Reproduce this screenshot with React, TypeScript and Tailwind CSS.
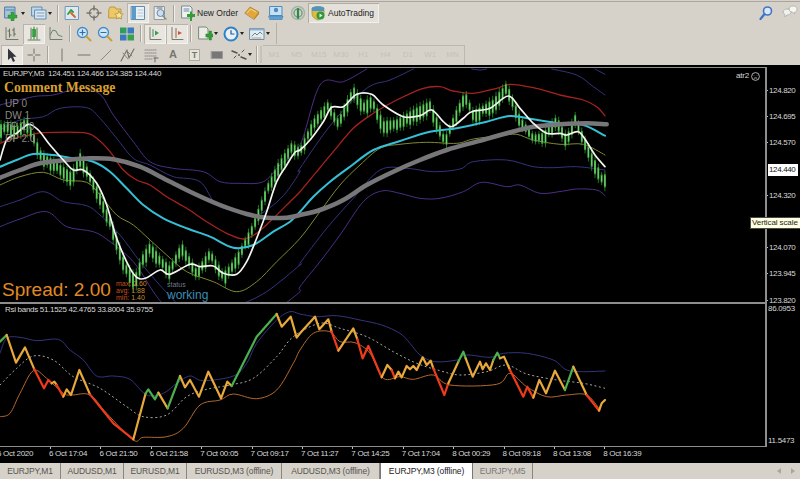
/**
 * MetaTrader 4 window: toolbars, EURJPY chart with RSI sub-window, chart tabs.
 */

import type { ReactNode } from 'react';

type Pt = [number, number];

// points were read off 3x crops, so they come in crop coordinates
const crop = (ox: number, oy: number, pts: number[]): Pt[] => {
  const out: Pt[] = [];
  for (let i = 0; i < pts.length; i += 2) out.push([ox + pts[i] / 3, oy + pts[i + 1] / 3]);
  return out;
};
const L = (...p: number[]) => crop(0, 65, p);
const R = (...p: number[]) => crop(300, 65, p);
const L2 = (...p: number[]) => crop(0, 300, p);
const R2 = (...p: number[]) => crop(300, 300, p);

const smooth = (p: Pt[]) => {
  let d = `M${p[0][0].toFixed(1)} ${p[0][1].toFixed(1)}`;
  for (let i = 0; i < p.length - 1; i++) {
    const a = p[Math.max(i - 1, 0)];
    const b = p[i];
    const c = p[i + 1];
    const e = p[Math.min(i + 2, p.length - 1)];
    d += `C${(b[0] + (c[0] - a[0]) / 6).toFixed(1)} ${(b[1] + (c[1] - a[1]) / 6).toFixed(1)} ${(c[0] - (e[0] - b[0]) / 6).toFixed(1)} ${(c[1] - (e[1] - b[1]) / 6).toFixed(1)} ${c[0].toFixed(1)} ${c[1].toFixed(1)}`;
  }
  return d;
};
const poly = (p: Pt[]) => p.map((q) => q.join(',')).join(' ');

const mainLines: { color: string; width: number; pts: Pt[] }[] = [
  // lower purple
  { color: '#4b2f86', width: 1, pts: [...L(0, 485, 60, 462, 140, 440, 200, 485, 280, 500, 330, 530, 400, 590, 460, 680, 490, 720)] },
  { color: '#4b2f86', width: 1, pts: [...L(850, 720, 900, 680), ...R(0, 665, 60, 590, 120, 510, 190, 410, 245, 378, 300, 385, 360, 400, 420, 400, 490, 380, 545, 352, 620, 365, 660, 360, 720, 385, 790, 378, 830, 372, 890, 375, 915, 392)] },
  // lower blue
  { color: '#33337f', width: 1, pts: [...L(0, 425, 60, 405, 130, 380, 190, 410, 260, 422, 300, 450, 360, 510, 420, 590, 470, 650, 530, 715)] },
  { color: '#33337f', width: 1, pts: [...L(720, 720, 800, 680, 900, 600), ...R(0, 595, 80, 490, 160, 400, 240, 315, 320, 310, 400, 320, 480, 312, 520, 290, 620, 285, 700, 305, 760, 308, 830, 305, 915, 315)] },
  // upper purple and blue
  { color: '#4b2f86', width: 1, pts: [...L(0, 120, 100, 95, 160, 90, 240, 70, 300, 88, 340, 150, 400, 230, 450, 290, 520, 310, 610, 320, 660, 350, 720, 355, 790, 350, 840, 300, 900, 240), ...R(60, 60, 130, 50, 200, 12)] },
  { color: '#33337f', width: 1, pts: [...L(0, 195, 60, 165, 130, 155, 180, 130, 260, 128, 300, 160, 350, 220, 400, 280, 450, 300, 520, 335, 600, 350, 650, 420, 720, 440, 770, 450, 820, 420, 860, 380, 900, 320), ...R(0, 310, 100, 170, 200, 70, 270, 45, 340, 12)] },
  { color: '#33337f', width: 1, pts: R(515, 12, 540, 15, 560, 12) },
  { color: '#33337f', width: 1, pts: R(755, 12, 830, 30, 880, 65, 915, 90) },
  { color: '#33337f', width: 1, pts: R(885, 12, 915, 28) },
  // red
  { color: '#a5221f', width: 1.3, pts: [...L(0, 235, 40, 220, 90, 210, 130, 203, 250, 203, 290, 220, 330, 260, 370, 315, 410, 345, 450, 360, 500, 395, 560, 430, 620, 470, 680, 505, 730, 522, 770, 505, 820, 460, 870, 410, 900, 380), ...R(50, 320, 100, 260, 160, 190, 220, 145, 290, 105, 370, 70, 420, 65, 460, 78, 520, 85, 590, 70, 630, 58, 700, 68, 780, 90, 850, 105, 890, 125, 915, 152)] },
  // olive
  { color: '#808a30', width: 1, pts: [...L(0, 360, 60, 335, 130, 322, 190, 345, 260, 352, 300, 390, 350, 450, 400, 480, 450, 525, 500, 570, 560, 620, 640, 650, 710, 680, 770, 650, 830, 590, 900, 520), ...R(60, 440, 120, 360, 180, 300, 240, 250, 300, 238, 380, 232, 470, 235, 520, 222, 600, 212, 650, 208, 700, 225, 780, 238, 850, 238, 915, 270)] },
];

const cyan = [...L(0, 305, 50, 285, 100, 267, 160, 270, 220, 280, 280, 290, 330, 320, 380, 370, 430, 420, 490, 460, 560, 490, 630, 515, 700, 548, 760, 540, 820, 500, 870, 470, 900, 440), ...R(40, 395, 90, 350, 150, 305, 220, 255, 300, 228, 390, 200, 470, 190, 560, 170, 630, 153, 700, 163, 780, 175, 850, 180, 915, 212)];
const grayMa = [...L(0, 338, 60, 315, 120, 295, 200, 285, 270, 280, 340, 283, 420, 305, 500, 345, 580, 385, 660, 420, 740, 447, 800, 458, 860, 458, 900, 450), ...R(60, 435, 130, 405, 200, 360, 280, 320, 360, 285, 440, 255, 530, 230, 620, 205, 700, 185, 780, 178, 860, 175, 920, 178)];
const whiteMa = [...L(0, 285, 20, 225, 50, 205, 85, 178, 115, 195, 150, 240, 190, 285, 220, 315, 250, 315, 290, 355, 320, 420, 350, 520, 390, 610, 415, 640, 440, 638, 480, 615, 510, 628, 570, 598, 600, 605, 640, 603, 670, 625, 710, 628, 740, 590, 770, 520, 800, 440, 830, 350, 860, 300, 885, 262), ...R(0, 255, 30, 225, 70, 170, 95, 127, 130, 125, 170, 88, 215, 88, 250, 120, 310, 155, 360, 152, 395, 135, 430, 170, 455, 185, 490, 160, 515, 140, 570, 130, 625, 93, 660, 130, 700, 175, 740, 205, 780, 205, 800, 210, 835, 200, 860, 230, 885, 270, 915, 305)];

const candlePath = [...L(0, 195, 20, 190, 50, 200, 80, 175, 100, 220, 125, 280, 160, 300, 215, 340, 240, 280, 265, 330, 300, 400, 340, 500, 375, 610, 405, 650, 425, 590, 450, 550, 480, 590, 510, 620, 545, 550, 590, 630, 630, 570, 670, 640, 695, 610, 720, 570, 760, 490, 800, 380, 835, 310, 875, 250), ...R(0, 265, 40, 180, 85, 125, 115, 180, 160, 80, 190, 130, 215, 110, 250, 185, 290, 180, 340, 150, 390, 125, 435, 235, 465, 160, 495, 95, 520, 155, 580, 120, 620, 70, 660, 170, 700, 225, 730, 220, 770, 170, 800, 230, 825, 165, 860, 250, 905, 345)];

const candleY = (x: number) => {
  for (let i = 0; i < candlePath.length - 1; i++) {
    const [x0, y0] = candlePath[i];
    const [x1, y1] = candlePath[i + 1];
    if (x >= x0 && x <= x1) return y0 + ((y1 - y0) * (x - x0)) / (x1 - x0 || 1);
  }
  return candlePath[candlePath.length - 1][1];
};

const candles: { x: number; y: number; body: number; wick: number }[] = [];
for (let x = 1; x < 605; x += 3.3) {
  const n = Math.abs(Math.sin(x * 12.9898) * 43758.5453) % 1;
  candles.push({ x, y: candleY(x) + (n - 0.5) * 3, body: 3 + n * 3.5, wick: 6 + n * 5 });
}

const GREEN = '#4caf50';
const AMBER = '#e8a93a';
const RED = '#f03a1c';
const rsi: [string, Pt[]][] = [
  [GREEN, L2(0, 125, 20, 105)],
  [AMBER, L2(20, 105, 48, 188, 75, 142, 103, 208)],
  [RED, L2(103, 208, 132, 265, 145, 240, 155, 250)],
  [AMBER, L2(155, 250, 163, 245, 170, 255)],
  [RED, L2(170, 255, 190, 290)],
  [AMBER, L2(190, 290, 200, 268, 213, 285, 238, 210, 270, 283)],
  [RED, L2(270, 283, 340, 370, 400, 418)],
  [AMBER, L2(400, 418, 437, 280)],
  [GREEN, L2(437, 280, 445, 268, 465, 298, 475, 278)],
  [AMBER, L2(475, 278, 503, 325)],
  [GREEN, L2(503, 325, 540, 228)],
  [AMBER, L2(540, 228, 555, 262, 570, 240, 597, 290, 625, 215, 663, 295, 682, 245, 695, 258)],
  [GREEN, L2(695, 258, 770, 110, 830, 42)],
  [AMBER, [...L2(830, 42, 845, 80, 872, 50, 890, 113), ...R2(0, 100, 45, 50, 58, 88, 85, 58, 95, 95)]],
  [RED, R2(95, 95, 115, 152)],
  [AMBER, R2(115, 152, 160, 85, 172, 118)],
  [RED, R2(172, 118, 188, 175, 205, 138, 245, 232)],
  [AMBER, R2(245, 232, 262, 195, 275, 210)],
  [RED, R2(275, 210, 285, 235)],
  [AMBER, R2(285, 235, 295, 215, 305, 232, 320, 198, 330, 208, 340, 198, 350, 210, 368, 172, 380, 195, 392, 182, 400, 205)],
  [RED, R2(400, 205, 433, 285, 445, 250)],
  [AMBER, R2(445, 250, 475, 185)],
  [GREEN, R2(475, 185, 490, 155, 497, 175)],
  [AMBER, R2(497, 175, 518, 230, 540, 185, 548, 208, 558, 190, 570, 210, 580, 180)],
  [GREEN, R2(580, 180, 592, 158, 600, 175)],
  [AMBER, R2(600, 175, 612, 170, 630, 210)],
  [RED, R2(630, 210, 670, 290, 682, 260, 700, 293)],
  [AMBER, R2(700, 293, 718, 240, 738, 280, 765, 212, 795, 270)],
  [GREEN, R2(795, 270, 820, 200)],
  [AMBER, R2(820, 200, 860, 285)],
  [RED, R2(860, 285, 897, 332)],
  [AMBER, R2(897, 332, 905, 310, 915, 300)],
];
const rsiBlue = [...L2(0, 160, 20, 115, 60, 112, 110, 122, 175, 118, 210, 150, 250, 180, 290, 228, 340, 228, 390, 238, 440, 285, 490, 280, 530, 250, 570, 228, 610, 242, 700, 228, 740, 190, 770, 130, 830, 60, 870, 35), ...R2(0, 42, 50, 50, 110, 47, 180, 60, 245, 75, 300, 100, 330, 130, 360, 165, 405, 185, 470, 180, 500, 165, 570, 172, 610, 160, 680, 160, 760, 180, 800, 210, 850, 215, 915, 213)];
const rsiOrange = [...L2(0, 350, 30, 340, 60, 280, 100, 212, 140, 235, 190, 280, 215, 285, 270, 285, 320, 340, 400, 420, 430, 412, 500, 410, 550, 385, 600, 315, 660, 300, 700, 282, 770, 296, 830, 270, 880, 190), ...R2(0, 150, 40, 100, 90, 95, 120, 125, 165, 128, 210, 160, 250, 235, 300, 230, 340, 238, 400, 225, 450, 255, 590, 253, 630, 220, 680, 260, 740, 290, 800, 285, 860, 285, 900, 330)];
const rsiDash = [...L2(0, 255, 50, 205, 100, 168, 160, 180, 220, 230, 300, 265, 380, 320, 430, 350, 500, 345, 560, 290, 620, 268, 690, 255, 760, 235, 830, 170, 880, 110), ...R2(60, 70, 120, 85, 200, 110, 280, 155, 350, 190, 420, 212, 480, 225, 560, 215, 620, 195, 680, 222, 770, 240, 850, 250, 915, 265)];

const priceTop = (p: number) => 90 + (124.82 - p) * 210 - 67 - 4.5;
const prices = ['124.820', '124.695', '124.570', '124.320', '124.070', '123.945', '123.820'];
const times = ['6 Oct 2020', '6 Oct 17:04', '6 Oct 21:50', '6 Oct 21:58', '7 Oct 00:05', '7 Oct 09:17', '7 Oct 11:27', '7 Oct 14:25', '7 Oct 17:04', '8 Oct 00:29', '8 Oct 09:18', '8 Oct 13:08', '8 Oct 16:39'];
const tabs = [
  { name: 'EURJPY,M1', w: 'w-[61px]' },
  { name: 'AUDUSD,M1', w: 'w-[63px]' },
  { name: 'EURUSD,M1', w: 'w-[63px]' },
  { name: 'EURUSD,M3 (offline)', w: 'w-[95px]' },
  { name: 'AUDUSD,M3 (offline)', w: 'w-[98px]' },
];

const sans = "font-['Liberation_Sans',Arial,sans-serif]";

function Ic({ children }: { children: ReactNode }) {
  return (
    <svg width="16" height="16" viewBox="0 0 16 16" fill="none" strokeLinecap="round" strokeLinejoin="round">
      {children}
    </svg>
  );
}

function Btn({ children, active, arrow, w = 'w-[22px]' }: { children?: ReactNode; active?: boolean; arrow?: boolean; w?: string }) {
  return (
    <div className={`${w} flex h-[20px] shrink-0 items-center justify-center gap-[1px] ${active ? 'bg-[#e9e6e0] shadow-[inset_1px_1px_0_#b8b4ac,inset_-1px_-1px_0_#f4f2ee]' : ''}`}>
      {children}
      {arrow && <span className="h-0 w-0 border-x-[2.5px] border-t-[3px] border-x-transparent border-t-[#222]" />}
    </div>
  );
}

const Sep = () => <div className="mx-[2px] h-[17px] w-[2px] shrink-0 border-r border-l border-r-[#f0eee8] border-l-[#a8a49c]" />;

const Plus = () => <path d="M9 8h3V5h2.5v3H16v3h-1.500v3H12v-3H9z" fill="#2f9e35" stroke="#1f7a26" strokeWidth=".4" />;

const chartLine = '#66705f';

const icons = {
  newChart: <Ic><path d="M1 2h10v11H1z" fill="#a8c4dc" stroke="#4d7ea8" /><path d="M2 5h8" stroke="#4d7ea8" /><path d="M7 7h3v3H13v3h-3v3H7v-3H4v-3h3z" fill="#32a838" stroke="#1f7a26" strokeWidth=".4" /></Ic>,
  profiles: <Ic><path d="M1 2h10v9H1z" fill="#c4d8ea" stroke="#5f8cb4" /><path d="M4 5h11v9H4z" fill="#dbe7f1" stroke="#5f8cb4" /><path d="M6 8h7M6 11h7" stroke="#7a9cb8" /></Ic>,
  market: <Ic><path d="M1.500 1.500h13v13h-13z" fill="#dfe8ef" stroke="#6f9ac0" /><path d="M4 9l3-4 2 2" stroke="#2f9e35" strokeWidth="1.800" /><path d="M7 8l4 4" stroke="#d9622b" strokeWidth="1.800" /></Ic>,
  navigator: <Ic><circle cx="8" cy="8" r="4.500" stroke="#77766e" strokeWidth="1.300" /><path d="M8 1v4M8 11v4M1 8h4M11 8h4" stroke="#77766e" strokeWidth="1.500" /></Ic>,
  favorites: <Ic><path d="M1 4l1-2h5l1 2h5v9H1z" fill="#ecc868" stroke="#bb9a3c" /><path d="M11 6l1.300 2.700 3 .4-2.200 2 .6 3-2.700-1.500L8.300 14l.6-3-2.200-2 3-.4z" fill="#f6e29a" stroke="#a98c3a" strokeWidth=".7" /></Ic>,
  terminal: <Ic><path d="M1.500 1.500h13v13h-13z" fill="#e9f1f7" stroke="#5f8cb4" /><path d="M2 2h4v12H2z" fill="#5d9ac8" /><path d="M8 5h5M8 8h5M8 11h5" stroke="#b4c8d8" /></Ic>,
  tester: <Ic><path d="M2.500 1.500h10v13h-10z" fill="#ecebe6" stroke="#8f9aa4" /><circle cx="8.500" cy="8" r="3.500" fill="#cfdcea" stroke="#5f8cb4" /><path d="M5 3h5" stroke="#8f9aa4" strokeWidth="1.500" /><path d="M11 11l3 3" stroke="#8a8a7a" strokeWidth="1.500" /></Ic>,
  order: <Ic><path d="M2 1h8l2 2v10H2z" fill="#f1f2ee" stroke="#7a8a94" /><path d="M4 4h5M4 6h5" stroke="#5f8cb4" /><path d="M8 8h3V5.500h2V8h3v3h-3v4h-2v-4H8z" fill="#2f9e35" transform="translate(-1 1)" /></Ic>,
  gold: <Ic><path d="M1 8l5-6 9 5-5 7z" fill="#e2a63a" stroke="#a87a2a" strokeWidth=".7" /><path d="M3.500 7.500L6.500 4l5.500 3" stroke="#f6d98a" /><path d="M10 14l5-7v2l-5 6z" fill="#b8802c" /></Ic>,
  person: <Ic><path d="M2 1.500h12v9H2z" fill="#c9e0f2" stroke="#4d8cc0" /><circle cx="8" cy="5" r="2.200" fill="#4d8cc0" /><path d="M1 11h14l-1 3.500H2z" fill="#5fa0d4" stroke="#3d78a8" strokeWidth=".6" /></Ic>,
  signal: <Ic><circle cx="8" cy="8" r="6.500" stroke="#a8b4a8" strokeWidth="1.500" /><circle cx="8" cy="8" r="4" stroke="#6fa080" strokeWidth="1.500" /><path d="M8 4v9" stroke="#2f8a4a" strokeWidth="2.200" /></Ic>,
  shield: <Ic><path d="M2 3c2-2 10-2 12 0v6c0 3-3 5-6 6-3-1-6-3-6-6z" fill="#e8b838" stroke="#7a8a3c" strokeWidth=".6" /><path d="M2 3c2-2 10-2 12 0v3H2z" fill="#4d94cc" /><circle cx="10.500" cy="10.500" r="4" fill="#2f9a3c" /><path d="M9.500 8.500v4l3-2z" fill="#ecf4e0" /></Ic>,
  bars: <Ic><path d="M2 1.500v12h12" stroke={chartLine} strokeWidth=".9" /><path d="M5.500 3v8M4 5h1.500M5.500 9H7M10 2v8M8.500 4H10M10 8h1.500" stroke={chartLine} strokeWidth="1.100" /></Ic>,
  candle: <Ic><path d="M2 14h12" stroke="#5f7a5a" /><path d="M5 2v11M11 2v11" stroke="#5f7a5a" /><path d="M8 1v12" stroke="#1f8a2c" /><path d="M6.500 3.500h3v7h-3z" fill="#2fa83a" stroke="#1f7a26" strokeWidth=".6" /></Ic>,
  line: <Ic><path d="M2 1.500v12h12" stroke={chartLine} strokeWidth=".9" /><path d="M2 9l3-5 3 1 2 4 4 1.500" stroke="#5a8a70" /></Ic>,
  zoomIn: <Ic><circle cx="6.500" cy="6.500" r="5" fill="#cfe4f5" stroke="#3d8acc" strokeWidth="1.300" /><path d="M4 6.500h5M6.500 4v5" stroke="#2a6fb0" strokeWidth="1.200" /><path d="M10.500 10.500l4 4" stroke="#c8a038" strokeWidth="2" /></Ic>,
  zoomOut: <Ic><circle cx="6.500" cy="6.500" r="5" fill="#cfe4f5" stroke="#3d8acc" strokeWidth="1.300" /><path d="M4 6.500h5" stroke="#2a6fb0" strokeWidth="1.200" /><path d="M10.500 10.500l4 4" stroke="#c8a038" strokeWidth="2" /></Ic>,
  tile: <Ic><path d="M1 1.500h6.500v6H1z" fill="#2f9e5a" /><path d="M8.500 1.500H15v6H8.500z" fill="#3a78c0" /><path d="M1 8.500h6.500v6H1z" fill="#3a78c0" /><path d="M8.500 8.500H15v6H8.500z" fill="#3aa04a" /></Ic>,
  scroll: <Ic><path d="M3 1.500v12h11" stroke={chartLine} strokeWidth=".9" /><path d="M6 3.500v7" stroke="#3f8a5a" /><path d="M8 4.500l4 2.500-4 2.500z" fill="#3f9a4c" /></Ic>,
  shift: <Ic><path d="M3 1.500v12h11" stroke={chartLine} strokeWidth=".9" /><path d="M7 2.500v9" stroke="#9a5a4a" /><path d="M9 5l4 2-4 2z" fill="#c8553a" /></Ic>,
  indicators: <Ic><path d="M2 1h7l2 2v10H2z" fill="#ececE6" stroke="#7a8a7a" /><Plus /></Ic>,
  clock: <Ic><circle cx="8" cy="8" r="6.500" fill="#e8f0f6" stroke="#2f80c4" strokeWidth="2" /><path d="M8 4.500V8h3" stroke="#2a5a90" strokeWidth="1.200" /></Ic>,
  template: <Ic><path d="M1 2.500h14v11H1z" fill="#e4ecf2" stroke="#6f8ca4" /><path d="M1 2.500h14v2H1z" fill="#8fb0cc" /><path d="M3 10l3-3 2 2 3-3 2 2" stroke="#5a8a8a" /><path d="M3 12h9" stroke="#b0a090" /></Ic>,
  cursor: <Ic><path d="M4 1.500v11.500l3-2.500 2 4.500 2-1-2-4.300h3.500z" fill="#33353a" /></Ic>,
  cross: <Ic><path d="M8 2v4.500M8 9.500V14M2 8h4.500M9.500 8H14" stroke="#6e6e68" /></Ic>,
  vline: <Ic><path d="M8 2v12" stroke="#72726c" /></Ic>,
  hline: <Ic><path d="M2 8h12" stroke="#72726c" /></Ic>,
  tline: <Ic><path d="M3 13L13 3" stroke="#8a8a84" /></Ic>,
  fib: <Ic><path d="M1 14L7 3l2 8 5-9" stroke="#6e6e68" strokeWidth="1.100" /><path d="M3 6l5 6M6 3l6 6" stroke="#8a8a84" /></Ic>,
  lines: <Ic><path d="M2 3h12M2 6h12M2 9h12" stroke="#8a8a84" strokeDasharray="1 1" /><path d="M2 12h8" stroke="#8a8a84" strokeDasharray="1 1" /><path d="M11 11h4M12 11v4" stroke="#66665f" /></Ic>,
  rect: <Ic><path d="M2.500 4.500h11v7h-11z" fill="#77777a" stroke="#9a9a96" /></Ic>,
  arrows: <Ic><path d="M1 4l5 2M10 10l5 2" stroke="#55554f" strokeWidth="1.500" /><path d="M3 11l2-2M11 5l2-2" stroke="#55554f" /><circle cx="8" cy="8" r="1" fill="#55554f" /></Ic>,
  balloon: <Ic><path d="M1 7c0-2 2-3 4-3s4 1 4 3-2 3-4 3l-2 2v-2.500C2 9 1 8 1 7z" fill="#f0f0ec" stroke="#a8a8a4" strokeWidth=".7" /><path d="M7 4c0-2 2-3 4-3s4 1 4 3-1 3-2.500 3.300V9l-2-2C8.500 7 7 6 7 4z" fill="#f6f6f2" stroke="#a8a8a4" strokeWidth=".7" /></Ic>,
  search: <Ic><circle cx="9.500" cy="6" r="4" fill="#dbe7f6" stroke="#3f74c8" strokeWidth="1.600" /><path d="M6.500 9L2.500 14" stroke="#3f74c8" strokeWidth="2.200" /></Ic>,
};

const Periods = ['M1', 'M5', 'M15', 'M30', 'H1', 'H4', 'D1', 'W1', 'MN'];

export default function App() {
  return (
    <div className={`flex h-[479px] w-[800px] flex-col overflow-hidden bg-[#d6d2ca] ${sans}`}>
      <div className="mt-[1px] h-[1px] bg-[#aaa5a0]" />

      {/* Toolbars */}
      <div className="flex h-[21px] items-center pt-[1px] pl-[1px] text-[8.500px] text-[#222]">
        <Btn arrow w="w-[27px]">{icons.newChart}</Btn>
        <Btn arrow w="w-[27px]">{icons.profiles}</Btn>
        <Sep />
        <Btn>{icons.market}</Btn>
        <Btn>{icons.navigator}</Btn>
        <Btn>{icons.favorites}</Btn>
        <Btn active>{icons.terminal}</Btn>
        <Btn>{icons.tester}</Btn>
        <Sep />
        <div className="ml-[3px] flex w-[60px] items-center gap-[1px]">
          {icons.order}
          <span className="leading-none whitespace-nowrap">New Order</span>
        </div>
        <Btn w="w-[24px]">{icons.gold}</Btn>
        <Btn w="w-[23px]">{icons.person}</Btn>
        <Btn w="w-[21px]">{icons.signal}</Btn>
        <div className="flex h-[20px] w-[71px] items-center gap-[2px] bg-[#e4e1da] pl-[2px] shadow-[inset_1px_1px_0_#b0aca4,inset_-1px_-1px_0_#f2f0ea]">
          {icons.shield}
          <span className="leading-none whitespace-nowrap">AutoTrading</span>
        </div>
        <div className="ml-auto flex items-center gap-[8px] pr-[2px]">
          {icons.search}
          {icons.balloon}
        </div>
      </div>

      <div className="flex h-[21px] w-[277px] items-center border-r border-r-[#b4b0a8] pl-[1px]">
        <Btn>{icons.bars}</Btn>
        <Btn active>{icons.candle}</Btn>
        <Btn>{icons.line}</Btn>
        <Sep />
        <Btn w="w-[21px]">{icons.zoomIn}</Btn>
        <Btn w="w-[21px]">{icons.zoomOut}</Btn>
        <Btn w="w-[23px]">{icons.tile}</Btn>
        <Sep />
        <Btn active>{icons.scroll}</Btn>
        <Btn active>{icons.shift}</Btn>
        <Sep />
        <Btn arrow w="w-[26px]">{icons.indicators}</Btn>
        <Btn arrow w="w-[26px]">{icons.clock}</Btn>
        <Btn arrow w="w-[26px]">{icons.template}</Btn>
      </div>

      <div className="flex h-[21px] items-center pl-[1px]">
        <Btn active>{icons.cursor}</Btn>
        <Btn>{icons.cross}</Btn>
        <Sep />
        <Btn>{icons.vline}</Btn>
        <Btn>{icons.hline}</Btn>
        <Btn>{icons.tline}</Btn>
        <Btn>{icons.fib}</Btn>
        <Btn w="w-[23px]">{icons.lines}</Btn>
        <Btn><span className="text-[11px] font-bold text-[#77776f]">A</span></Btn>
        <Btn w="w-[21px]"><span className="border border-[#b0aca0] bg-[#e4e4da] px-[2px] text-[9px] leading-[10px] font-bold text-[#77776f]">T</span></Btn>
        <Btn w="w-[24px]">{icons.rect}</Btn>
        <Btn arrow w="w-[25px]">{icons.arrows}</Btn>
        <Sep />
        <div className="h-[17px] w-[2px] shrink-0 bg-[#c6c2ba]" />
        <div className="ml-[1px] flex h-[20px] items-center border-t border-r border-[#bcb8b0]">
          {Periods.map((p) => (
            <div key={p} className="w-[22.300px] shrink-0 text-center text-[8px] text-[#c4c0b8]">{p}</div>
          ))}
        </div>
      </div>

      {/* Chart window */}
      <div className="flex h-[398px] flex-col bg-black pt-[2px] text-[#d8d8d8]">
        <div className="flex h-[235px]">
          <div className="relative h-full w-[767px] shrink-0 border-t border-r-2 border-t-[#8e8e8e] border-r-[#8e8e8e]">
            <svg className="absolute inset-0 h-full w-[765px]" viewBox="0 68 765 234" fill="none" strokeLinecap="round" strokeLinejoin="round">
              {mainLines.map((l, i) => (
                <path key={i} d={smooth(l.pts)} stroke={l.color} strokeWidth={l.width} />
              ))}
              {candles.map((c, i) => (
                <g key={i}>
                  <line x1={c.x} x2={c.x} y1={c.y - c.wick} y2={c.y + c.wick} stroke="#2e8f2e" strokeWidth="0.8" />
                  <line x1={c.x} x2={c.x} y1={c.y - c.body} y2={c.y + c.body} stroke="#3aa53a" strokeWidth="2" />
                  <line x1={c.x} x2={c.x} y1={c.y - c.body + 1} y2={c.y + c.body - 1} stroke="#8fe88f" strokeWidth="0.700" />
                </g>
              ))}
              <path d={smooth(cyan)} stroke="#35c0d6" strokeWidth="2" />
              <path d={smooth(grayMa)} stroke="#77777a" strokeWidth="4.500" />
              <path d={smooth(whiteMa)} stroke="#f4f4f0" strokeWidth="1.700" />
            </svg>

            {/* Chart overlays */}
            <div className="absolute top-[1px] left-[3px] text-[8px] leading-[10px] tracking-[-0.3px] whitespace-pre">EURJPY,M3  124.451 124.466 124.385 124.440</div>
            <div className="absolute top-[12px] left-[4px] font-['Liberation_Serif',serif] text-[13.800px] leading-[15px] font-bold whitespace-nowrap text-[#d8a02e]">Comment Message</div>
            <div className="absolute top-[30px] left-[5px] flex flex-col text-[10px] leading-[11.700px] text-[#8a8a84]">
              <span>UP 0</span>
              <span>DW 1</span>
              <span>TP 2.0</span>
              <span>DP 2.0</span>
            </div>
            <div className="absolute top-[211px] left-[2px] text-[19px] leading-[22px] whitespace-nowrap text-[#e08a24]">Spread: 2.00</div>
            <div className="absolute top-[212px] left-[116px] flex flex-col text-[7px] leading-[7px] text-[#c8501c]">
              <span>max: <span className="text-[#c88a2a]">2.60</span></span>
              <span>avg: <span className="text-[#c88a2a]">1.88</span></span>
              <span>min: <span className="text-[#c88a2a]">1.40</span></span>
            </div>
            <div className="absolute top-[213px] left-[167px] text-[7px] leading-[8px] text-[#6b7a88]">status</div>
            <div className="absolute top-[220px] left-[167px] text-[12px] leading-[14px] text-[#3a8cb4]">working</div>
            <div className="absolute top-[3px] right-[5px] flex items-center gap-[2px] text-[8px] leading-[10px] tracking-[-0.2px]">
              <span>atr2</span>
              <svg width="9" height="9" viewBox="0 0 9 9" fill="none" stroke="#d8d8d8" strokeWidth=".8">
                <circle cx="4.500" cy="4.500" r="3.900" />
                <path d="M3 3.200v.4M6 3.200v.4M2.800 6.500c1-.8 2.400-.8 3.400 0" />
              </svg>
            </div>
            <div className="absolute top-[149px] left-[750px] z-10 h-[12px] w-[50px] overflow-hidden border-y border-l border-[#4a4a40] bg-[#ffffe1] pl-[1px] text-[8px] leading-[10px] tracking-[-0.1px] whitespace-nowrap text-[#222]">Vertical scale</div>
          </div>
          <div className="relative flex-1 text-[8px] leading-[9px] tracking-[-0.35px]">
            {prices.map((p) => (
              <div key={p} className="absolute left-0 flex items-center whitespace-nowrap" style={{ top: priceTop(parseFloat(p)) }}>
                <span className="mr-[1px] h-[1px] w-[1px] bg-[#bbb]" />
                {p}
              </div>
            ))}
            <div className="absolute top-[97px] left-[1px] h-[12px] w-[30px] bg-white pl-[1px] leading-[12px] text-[#111]">124.440</div>
          </div>
        </div>

        <div className="flex h-[145px]">
          <div className="relative h-full w-[767px] shrink-0 border-t-2 border-r-2 border-b border-[#8e8e8e]">
            <svg className="absolute inset-0 h-full w-[765px]" viewBox="0 304 765 142" fill="none" strokeLinecap="round" strokeLinejoin="round">
              <path d={smooth(rsiBlue)} stroke="#34347e" strokeWidth="1" />
              <path d={smooth(rsiOrange)} stroke="#b56a2a" strokeWidth="1" />
              <path d={smooth(rsiDash)} stroke="#d0d0c8" strokeWidth=".8" strokeDasharray="2 2.500" strokeLinecap="butt" />
              {rsi.map(([color, pts], i) => (
                <polyline key={i} points={poly(pts)} stroke={color} strokeWidth="2.200" />
              ))}
            </svg>
            <div className="absolute top-[1px] left-[5px] text-[8px] leading-[10px] tracking-[-0.3px] whitespace-pre">Rsi bands 51.1525 42.4765 33.8004 35.9755</div>
          </div>
          <div className="flex flex-1 flex-col justify-between pl-[1px] text-[8px] leading-[10px] tracking-[-0.3px]">
            <span className="mt-[2px]">86.0953</span>
            <span className="mb-[1px]">11.5473</span>
          </div>
        </div>

        <div className="flex h-[16px] text-[8px] leading-[10px] tracking-[-0.3px]">
          {times.map((t, i) => (
            <div key={t} className={`${i === 0 ? '-ml-[3px] w-[52px]' : 'w-[50.400px]'} shrink-0 whitespace-nowrap`}>
              <span className="ml-[1px] block h-[2px] w-[1px] bg-[#bbb]" />
              {t}
            </div>
          ))}
        </div>
      </div>

      {/* Chart tabs */}
      <div className="flex h-[16px] items-stretch text-[8.500px] leading-[14px] tracking-[-0.1px] text-[#55534e]">
        {tabs.map((t) => (
          <div key={t.name} className={`${t.w} flex shrink-0 items-center justify-center border-r border-r-[#8a8680]`}>
            <span className="whitespace-nowrap">{t.name}</span>
          </div>
        ))}
        <div className="flex w-[93px] shrink-0 items-center justify-center border-x border-x-[#777] bg-white text-[#222]">
          <span className="whitespace-nowrap">EURJPY,M3 (offline)</span>
        </div>
        <div className="flex w-[60px] shrink-0 items-center justify-center border-r border-r-[#8a8680] text-[#777]">
          <span className="whitespace-nowrap">EURJPY,M5</span>
        </div>
        <div className="ml-auto flex items-center gap-[10px] pr-[5px] text-[8px] text-[#aaa69e]">
          <span className="h-0 w-0 border-y-[3px] border-r-[4px] border-y-transparent border-r-[#aaa69e]" />
          <span className="h-0 w-0 border-y-[3px] border-l-[4px] border-y-transparent border-l-[#aaa69e]" />
        </div>
      </div>
    </div>
  );
}
